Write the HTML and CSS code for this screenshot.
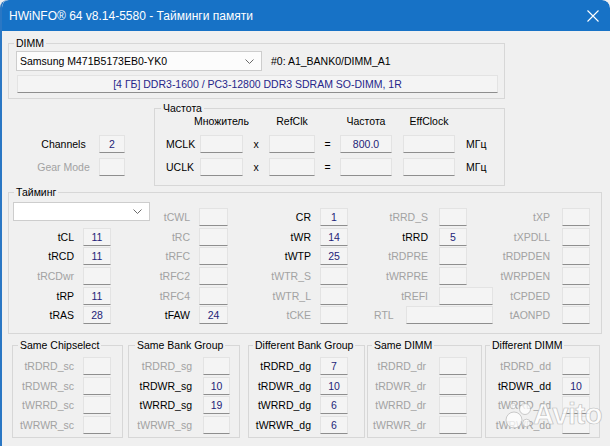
FILE: index.html
```html
<!DOCTYPE html>
<html>
<head>
<meta charset="utf-8">
<link rel="stylesheet" href="styles.css">
</head>
<body>
<div class="window">
  <div class="titlebar">
    <span class="title">HWiNFO® 64 v8.14-5580 - Тайминги памяти</span>
    <svg class="close" width="12" height="12" viewBox="0 0 12 12"><path d="M0.5 0.5 L11.5 11.5 M11.5 0.5 L0.5 11.5" stroke="#fff" stroke-width="1.1" fill="none"/></svg>
  </div>
  <div class="main">
    <div class="group dimm">
      <div class="gtitle">DIMM</div>
      <div class="dimm-row">
        <div class="combo combo-dimm"><span>Samsung M471B5173EB0-YK0</span><svg class="chev" width="9" height="5" viewBox="0 0 9 5"><path d="M0.5 0.5 L4.5 4.5 L8.5 0.5" stroke="#6a6a6a" stroke-width="1" fill="none"/></svg></div>
        <span class="slot">#0: A1_BANK0/DIMM_A1</span>
      </div>
      <div class="val info">[4 ГБ] DDR3-1600 / PC3-12800 DDR3 SDRAM SO-DIMM, 1R</div>
    </div>

    <div class="mid">
      <div class="chan">
        <div class="crow"><span class="clabel">Channels</span><span class="val cbox">2</span></div>
        <div class="crow"><span class="clabel dis">Gear Mode</span><span class="val cbox"></span></div>
      </div>
      <div class="group freq">
        <div class="gtitle">Частота</div>
        <div class="fgrid">
          <span></span><span class="fh">Множитель</span><span></span><span class="fh">RefClk</span><span></span><span class="fh">Частота</span><span></span><span class="fh">EffClock</span><span></span>
          <span class="flabel">MCLK</span><span class="val"></span><span class="sym">x</span><span class="val"></span><span class="sym">=</span><span class="val">800.0</span><span></span><span class="val"></span><span class="unit">МГц</span>
          <span class="flabel">UCLK</span><span class="val"></span><span class="sym">x</span><span class="val"></span><span class="sym">=</span><span class="val"></span><span></span><span class="val"></span><span class="unit">МГц</span>
        </div>
      </div>
    </div>

    <div class="group timing">
      <div class="gtitle">Тайминг</div>
      <div class="tgrid">
        <div class="combo combo-t"><span></span><svg class="chev" width="9" height="5" viewBox="0 0 9 5"><path d="M0.5 0.5 L4.5 4.5 L8.5 0.5" stroke="#6a6a6a" stroke-width="1" fill="none"/></svg></div>
        <span class="tl dis">tCWL</span><span class="val"></span>
        <span class="tl">CR</span><span class="val">1</span>
        <span class="tl w dis">tRRD_S</span><span class="val"></span><span></span>
        <span class="tl x dis">tXP</span><span class="val"></span>

        <span class="tl">tCL</span><span class="val">11</span>
        <span class="tl dis">tRC</span><span class="val"></span>
        <span class="tl">tWR</span><span class="val">14</span>
        <span class="tl w">tRRD</span><span class="val">5</span><span></span>
        <span class="tl x dis">tXPDLL</span><span class="val"></span>

        <span class="tl">tRCD</span><span class="val">11</span>
        <span class="tl dis">tRFC</span><span class="val"></span>
        <span class="tl">tWTP</span><span class="val">25</span>
        <span class="tl w dis">tRDPRE</span><span class="val"></span><span></span>
        <span class="tl x dis">tRDPDEN</span><span class="val"></span>

        <span class="tl dis">tRCDwr</span><span class="val"></span>
        <span class="tl dis">tRFC2</span><span class="val"></span>
        <span class="tl dis">tWTR_S</span><span class="val"></span>
        <span class="tl w dis">tWRPRE</span><span class="val"></span><span></span>
        <span class="tl x dis">tWRPDEN</span><span class="val"></span>

        <span class="tl">tRP</span><span class="val">11</span>
        <span class="tl dis">tRFC4</span><span class="val"></span>
        <span class="tl dis">tWTR_L</span><span class="val"></span>
        <span class="tl w dis">tREFI</span><span class="val span2"></span>
        <span class="tl x dis">tCPDED</span><span class="val"></span>

        <span class="tl">tRAS</span><span class="val">28</span>
        <span class="tl">tFAW</span><span class="val">24</span>
        <span class="tl dis">tCKE</span><span class="val"></span>
        <div class="rtl"><span class="dis">RTL</span><span class="val"></span></div>
        <span class="tl x dis">tAONPD</span><span class="val"></span>
      </div>
    </div>

    <div class="bottom">
      <div class="group bg g1">
        <div class="gtitle">Same Chipselect</div>
        <div class="brow"><span class="bl dis">tRDRD_sc</span><span class="val"></span></div>
        <div class="brow"><span class="bl dis">tRDWR_sc</span><span class="val"></span></div>
        <div class="brow"><span class="bl dis">tWRRD_sc</span><span class="val"></span></div>
        <div class="brow"><span class="bl dis">tWRWR_sc</span><span class="val"></span></div>
      </div>
      <div class="group bg g2">
        <div class="gtitle">Same Bank Group</div>
        <div class="brow"><span class="bl dis">tRDRD_sg</span><span class="val"></span></div>
        <div class="brow"><span class="bl">tRDWR_sg</span><span class="val">10</span></div>
        <div class="brow"><span class="bl">tWRRD_sg</span><span class="val">19</span></div>
        <div class="brow"><span class="bl dis">tWRWR_sg</span><span class="val"></span></div>
      </div>
      <div class="group bg g3">
        <div class="gtitle">Different Bank Group</div>
        <div class="brow"><span class="bl">tRDRD_dg</span><span class="val">7</span></div>
        <div class="brow"><span class="bl">tRDWR_dg</span><span class="val">10</span></div>
        <div class="brow"><span class="bl">tWRRD_dg</span><span class="val">6</span></div>
        <div class="brow"><span class="bl">tWRWR_dg</span><span class="val">6</span></div>
      </div>
      <div class="group bg g4">
        <div class="gtitle">Same DIMM</div>
        <div class="brow"><span class="bl dis">tRDRD_dr</span><span class="val"></span></div>
        <div class="brow"><span class="bl dis">tRDWR_dr</span><span class="val"></span></div>
        <div class="brow"><span class="bl dis">tWRRD_dr</span><span class="val"></span></div>
        <div class="brow"><span class="bl dis">tWRWR_dr</span><span class="val"></span></div>
      </div>
      <div class="group bg g5">
        <div class="gtitle">Different DIMM</div>
        <div class="brow"><span class="bl dis">tRDRD_dd</span><span class="val"></span></div>
        <div class="brow"><span class="bl">tRDWR_dd</span><span class="val">10</span></div>
        <div class="brow"><span class="bl dis">tWRRD_dd</span><span class="val"></span></div>
        <div class="brow"><span class="bl dis">tWRWR_dd</span><span class="val"></span></div>
      </div>
    </div>
  </div>

  <div class="watermark">
    <svg width="27" height="30" viewBox="0 0 27 30">
      <circle cx="9" cy="20" r="8" fill="#fff" fill-opacity="0.85" stroke="#b5b5b5" stroke-width="0.8"/>
      <circle cx="20" cy="9" r="5.5" fill="#fff" fill-opacity="0.85" stroke="#b5b5b5" stroke-width="0.8"/>
      <circle cx="21.5" cy="23" r="3.8" fill="#fff" fill-opacity="0.85" stroke="#b5b5b5" stroke-width="0.8"/>
      <circle cx="8" cy="6" r="2.8" fill="#fff" fill-opacity="0.85" stroke="#b5b5b5" stroke-width="0.8"/>
    </svg>
    <span>Avito</span>
  </div>
</div>
</body>
</html>
```

FILE: styles.css
```css
* { box-sizing: border-box; }
html, body { margin: 0; padding: 0; }
body {
  width: 610px;
  height: 446px;
  overflow: hidden;
  background: #f0f0f0;
  font-family: "Liberation Sans", Arial, sans-serif;
  font-size: 10.5px;
  color: #000;
}
.window {
  position: relative;
  width: 610px;
  height: 446px;
  background: #f0f0f0;
  border-left: 2px solid #2a77c4;
  border-radius: 8px 8px 0 0;
  overflow: hidden;
}
.titlebar {
  height: 31px;
  background: #1772c6;
  color: #fff;
  display: flex;
  align-items: center;
  padding-left: 7px;
  padding-right: 11px;
  border-radius: 7px 8px 0 0;
}
.title {
  font-size: 12px;
  flex: 1;
  padding-top: 1px;
}
.close { display: block; margin-top: 1px; }

.main { padding: 12px 0 0 6px; }

.group {
  border: 1px solid #d7d7d7;
}
.gtitle {
  width: fit-content;
  margin-top: -7px;
  margin-left: 5px;
  padding: 0 2px;
  height: 13px;
  line-height: 13px;
  background: #f0f0f0;
  white-space: nowrap;
}
.dis { color: #a2a2a2; }

.val {
  display: block;
  height: 18px;
  line-height: 16px;
  background: #f4f4f4;
  border: 1px solid #e3e3e3;
  border-bottom-color: #8e8e8e;
  color: #1e1e78;
  text-align: center;
  white-space: nowrap;
}

/* DIMM */
.dimm {
  width: 497px;
  height: 56px;
}
.dimm .gtitle { margin-left: 5px; }
.dimm-row {
  display: flex;
  align-items: center;
  margin-top: 1px;
  margin-left: 7px;
}
.combo {
  display: flex;
  align-items: center;
  justify-content: space-between;
  background: #fcfcfc;
  border: 1px solid #cdcdcd;
  padding: 0 7px 0 3px;
}
.combo-dimm {
  width: 246px;
  height: 20px;
}
.slot { margin-left: 9px; }
.info {
  width: 481px;
  margin-top: 4px;
  margin-left: 8px;
  color: #26268a;
}

/* middle */
.mid {
  display: flex;
  margin-top: 9px;
  height: 78px;
}
.chan {
  width: 146px;
  padding-top: 27px;
  display: flex;
  flex-direction: column;
  gap: 5px;
}
.crow {
  display: flex;
  align-items: center;
  height: 18px;
}
.clabel {
  width: 65px;
  margin-left: 23px;
  text-align: center;
}
.cbox {
  width: 26px;
  margin-left: 3px;
}
.freq {
  width: 351px;
  height: 78px;
}
.freq .gtitle { margin-left: 6px; }
.fgrid {
  display: grid;
  grid-template-columns: 45px 43px 26px 46px 25px 52px 11px 52px 1fr;
  grid-template-rows: 15px 18px 18px;
  row-gap: 5px;
}
.fh {
  display: flex;
  justify-content: center;
  white-space: nowrap;
  line-height: 13px;
}
.flabel { padding-left: 11px; line-height: 18px; }
.sym { text-align: center; line-height: 19px; }
.unit { padding-left: 11px; line-height: 19px; }

/* timing */
.timing {
  width: 594px;
  height: 142px;
  margin-top: 6px;
}
.tgrid {
  display: grid;
  grid-template-columns: 74px 28px 88px 29px 92px 28px 91px 28px 26px 69px 28px;
  grid-auto-rows: 18px;
  row-gap: 1.7px;
  margin-top: 9px;
}
.tl {
  text-align: right;
  padding-right: 9px;
  line-height: 18px;
  white-space: nowrap;
}
.tl.w { padding-right: 11px; }
.tl.x { padding-right: 12px; }
.combo-t {
  grid-column: span 2;
  width: 137px;
  height: 19px;
  margin-top: -6px;
  margin-left: 4px;
  background: #fff;
}
.span2 { grid-column: span 2; }
.rtl {
  grid-column: span 3;
  display: flex;
  align-items: center;
}
.rtl span:first-child { margin-left: 26px; width: 32px; }
.rtl .val { width: 88px; }

/* bottom */
.bottom {
  display: flex;
  margin-top: 11px;
  margin-left: 4px;
}
.bg {
  height: 93px;
}
.brow {
  display: flex;
  height: 18px;
  margin-top: 1.7px;
}
.gtitle + .brow { margin-top: 5px; }
.bl {
  text-align: right;
  line-height: 18px;
  white-space: nowrap;
}
.brow .val { width: 28px; }
.g1 { width: 111px; }
.g1 .gtitle { margin-left: 5px; }
.g1 .bl { width: 70px; padding-right: 9px; }
.g2 { width: 112px; margin-left: 5px; }
.g2 .gtitle { margin-left: 6px; }
.g2 .bl { width: 74px; padding-right: 11px; }
.g2 .val { width: 27px; }
.g3 { width: 117px; margin-left: 8px; }
.g3 .gtitle { margin-left: 4px; }
.g3 .bl { width: 71px; padding-right: 9px; }
.g4 { width: 115px; margin-left: 2px; }
.g4 .gtitle { margin-left: 4px; }
.g4 .bl { width: 71px; padding-right: 13px; }
.g5 { width: 115px; margin-left: 3px; }
.g5 .gtitle { margin-left: 4px; }
.g5 .bl { width: 76px; padding-right: 11px; }

/* watermark overlay */
.watermark {
  position: absolute;
  left: 503px;
  top: 398px;
  display: flex;
  align-items: center;
  gap: 1px;
  opacity: 0.85;
}
.watermark span {
  font-family: "Liberation Sans", Arial, sans-serif;
  font-weight: bold;
  font-size: 29px;
  color: #fff;
  -webkit-text-stroke: 0.7px #b5b5b5;
  letter-spacing: -0.5px;
}
```
